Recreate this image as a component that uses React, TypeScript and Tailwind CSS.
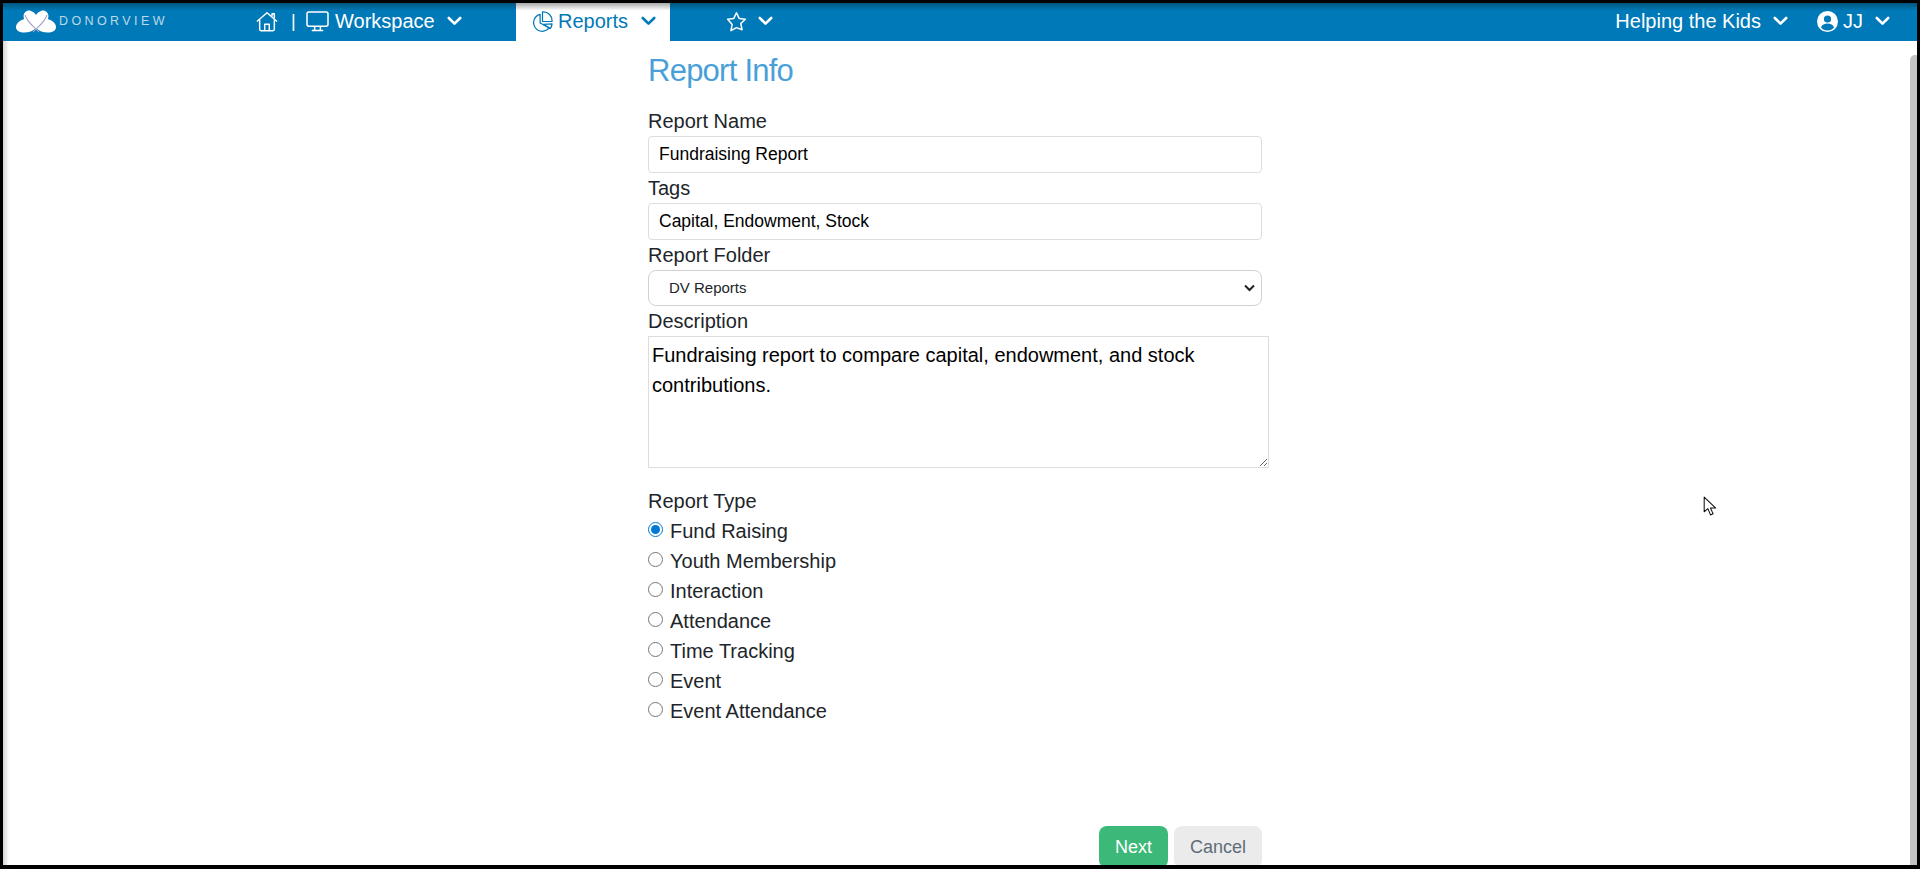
import React from 'react';

const reportTypes = ['Fund Raising', 'Youth Membership', 'Interaction', 'Attendance', 'Time Tracking', 'Event', 'Event Attendance'];

function Chevron({ className, color = '#fff' }: { className: string; color?: string }) {
  return (
    <svg width="15" height="10" viewBox="0 0 15 10" fill="none" stroke={color} strokeWidth="2.6" strokeLinecap="round" strokeLinejoin="round" className={className}>
      <path d="M1.800 2 7.500 7.600 13.200 2" />
    </svg>
  );
}

function Logo() {
  return (
    <svg width="40" height="23" viewBox="0 0 40 23">
      <path d="M9 9C3 10 0 14 0 17c0 4 4 5.500 8 5.500 5 0 9-1.500 12-4.500 3 3 7 4.500 12 4.500 4 0 8-1.500 8-5.500 0-3-3-7-9-8z" fill="#fff" />
      <path d="M20 20 9 10C5 5 10-1 15 1c2 .7 4 2 5 4 1-2 3-3.300 5-4 5-2 10 4 6 9z" fill="#fff" />
      <path d="M9 5c2 7 9 12 14 17M31 5c-2 7-9 12-14 17" fill="none" stroke="#a4a2c8" strokeWidth="1.100" />
    </svg>
  );
}

function House() {
  return (
    <svg width="22" height="21" viewBox="0 0 24 22" fill="none" stroke="#fff" strokeWidth="1.600" strokeLinejoin="round">
      <path d="M1 11 12 1.500 23 11" />
      <path d="M4 9v10.500a1.500 1.500 0 0 0 1.500 1.500h13a1.500 1.500 0 0 0 1.500-1.500V9" />
      <path d="M9.500 21v-7h5v7" />
      <path d="M17.500 5.500V2.500h2.500v5" />
    </svg>
  );
}

function Monitor() {
  return (
    <svg width="23" height="21" viewBox="0 0 24 22" fill="none" stroke="#fff" strokeWidth="1.600" strokeLinejoin="round">
      <rect x="1" y="1" width="22" height="15" rx="2" />
      <path d="M9 16v4M15 16v4M6 20.500h12" />
    </svg>
  );
}

function PieIcon() {
  return (
    <svg width="21" height="21" viewBox="0 0 22 22" fill="none" stroke="#0079b8" strokeWidth="1.300" strokeLinejoin="round">
      <path d="M8.500 3.500a9 9 0 1 0 9.500 14L8.500 12.500z" />
      <path d="M11 1h1a9 9 0 0 1 9 9v1H11z" />
      <path d="M12 14l9-.5a9 9 0 0 1-2 5z" />
    </svg>
  );
}

function Star() {
  return (
    <svg width="21" height="21" viewBox="0 0 22 22" fill="none" stroke="#fff" strokeWidth="1.600" strokeLinejoin="round">
      <path d="M11 1.800l2.800 6 6.500.8-4.800 4.500 1.300 6.500L11 17.400l-5.800 3.200 1.300-6.500L1.700 8.600l6.500-.8z" />
    </svg>
  );
}

function UserCircle() {
  return (
    <svg width="21" height="21" viewBox="0 0 21 21">
      <circle cx="10.500" cy="10.500" r="10.500" fill="#fff" />
      <circle cx="10.500" cy="8" r="3.600" fill="#0079b8" />
      <path d="M4 16.500c1-3 3.500-4 6.500-4s5.500 1 6.500 4c-1.500 1.800-3.800 3-6.500 3s-5-1.200-6.500-3z" fill="#0079b8" />
    </svg>
  );
}

function Label({ children }: { children: React.ReactNode }) {
  return <div className="h-[30px] text-[20px] leading-[30px] text-[#212529]">{children}</div>;
}

export default function App() {
  return (
    <div className="relative h-[869px] overflow-hidden border-[3px] border-b-[4px] border-black bg-white font-['Liberation_Sans',sans-serif]">
      <nav className="relative flex h-[38px] items-center bg-gradient-to-b from-[#01567f] to-[#0079b8] to-20% pb-[2px] text-[20px] text-white">
        <div className="ml-[13px] flex w-[240px] items-center gap-[3px]">
          <Logo />
          <span className="text-[12.500px] tracking-[3.400px] text-[#bcd9e8]">DONORVIEW</span>
        </div>
        <House />
        <span className="ml-[13px] mr-[10px] w-[5px] text-[18px]">|</span>
        <Monitor />
        <span className="ml-[6px] w-[112px]">Workspace</span>
        <Chevron className="" />
        <div className="ml-[54px] mb-[-2px] flex h-[38px] w-[154px] items-center bg-gradient-to-b from-[#a8a8a8] to-white to-20% pb-[2px] pl-[16px] text-[#0079b8]">
          <PieIcon />
          <span className="ml-[5px] w-[83px]">Reports</span>
          <Chevron className="" color="#0079b8" />
        </div>
        <div className="ml-[56px]"><Star /></div>
        <Chevron className="ml-[11px]" />
        <div className="ml-auto flex items-center pr-[27px]">
          <span>Helping the Kids</span>
          <Chevron className="ml-[12px]" />
          <div className="ml-[29px]"><UserCircle /></div>
          <span className="ml-[5px] w-[32px]">JJ</span>
          <Chevron className="" />
        </div>
      </nav>

      <div className="absolute left-0 top-[38px] h-[824px] w-[6px] bg-gradient-to-r from-[#d4d4d4] to-white" />

      <main className="relative ml-[645px] flex w-[621px] flex-col">
        <h1 className="mt-[11px] text-[31px] leading-[38px] tracking-[-0.750px] text-[#4a9fd8]">Report Info</h1>
        <div className="mt-[16px]"><Label>Report Name</Label></div>
        <input readOnly value="Fundraising Report" className="h-[37px] w-[614px] rounded-[4px] border border-[#dddddd] px-[10px] text-[17.500px] text-black outline-none" />
        <Label>Tags</Label>
        <input readOnly value="Capital, Endowment, Stock" className="h-[37px] w-[614px] rounded-[4px] border border-[#dddddd] px-[10px] text-[17.500px] text-black outline-none" />
        <Label>Report Folder</Label>
        <div className="relative h-[36px] w-[614px]">
          <select defaultValue="DV Reports" className="h-[36px] w-[614px] appearance-none rounded-[8px] border border-[#cfd2d6] bg-white pl-[20px] text-[15px] text-[#212529] outline-none">
            <option>DV Reports</option>
          </select>
          <svg className="absolute right-[7px] top-[14px]" width="11" height="8" viewBox="0 0 11 8" fill="none" stroke="#222" strokeWidth="2">
            <path d="M1 1.500 5.500 6 10 1.500" />
          </svg>
        </div>
        <Label>Description</Label>
        <textarea readOnly value={'Fundraising report to compare capital, endowment, and stock contributions.'} className="h-[132px] w-[621px] border border-[#dddddd] px-[3px] py-[3px] text-[20px] leading-[30px] text-black outline-none" />
        <div className="mt-[18px]"><Label>Report Type</Label></div>
        {reportTypes.map((t, i) => (
          <label key={t} className="flex h-[30px] items-center text-[20px] text-[#212529]">
            <input type="radio" name="type" defaultChecked={i === 0} className="mt-[-3px] h-[15px] w-[15px] accent-[#0078d4]" />
            <span className="ml-[7px]">{t}</span>
          </label>
        ))}
        <div className="mt-[100px] flex justify-end gap-[6px] pr-[7px]">
          <button className="h-[42px] w-[69px] rounded-[8px] bg-[#3cb878] text-[18px] text-white">Next</button>
          <button className="h-[42px] w-[88px] rounded-[8px] bg-[#ebebeb] text-[18px] text-[#5f6b7a]">Cancel</button>
        </div>
      </main>

      <div className="absolute right-0 top-[52px] h-[810px] w-[7px] rounded-tl-[5px] bg-[#c4c4c4]" />

      <svg className="absolute left-[1700px] top-[493px]" width="15" height="21" viewBox="0 0 14 20">
        <path d="M1 1v14l3.500-3 2.500 6 2.500-1-2.500-5.500h5z" fill="#fff" stroke="#111" strokeWidth="1" strokeLinejoin="round" />
      </svg>
    </div>
  );
}
